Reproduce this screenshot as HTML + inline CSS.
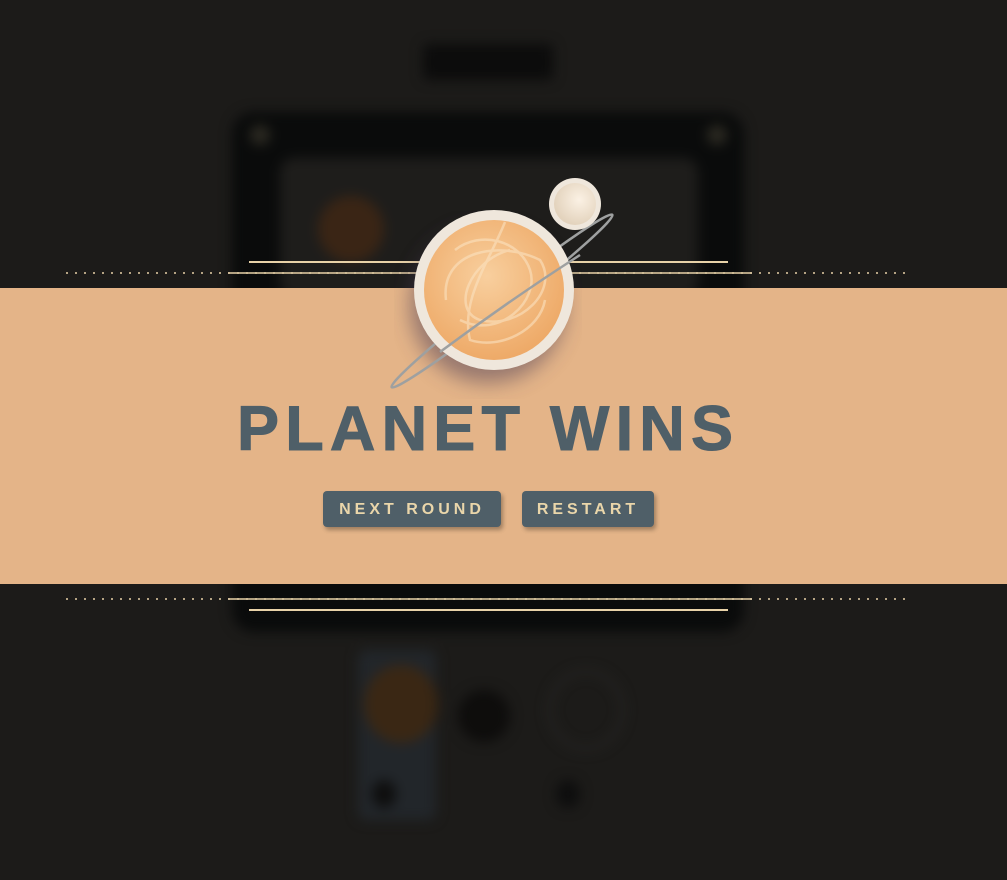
<!DOCTYPE html>
<html><head><meta charset="utf-8"><style>
html,body{margin:0;padding:0;width:1007px;height:880px;overflow:hidden;background:#1c1b19;font-family:"Liberation Sans",sans-serif}
.bg{position:absolute;inset:0;filter:blur(6px)}
.abs{position:absolute}
.banner{position:absolute;left:0;top:288px;width:1007px;height:296px;background:#e4b488}
.title{position:absolute;left:237px;width:520px;top:392px;text-align:left;font-size:63px;font-weight:bold;letter-spacing:6.2px;color:#4f5f68;line-height:74px;-webkit-text-stroke:1px #4f5f68;white-space:nowrap}
.btn{position:absolute;top:491px;height:36px;background:#4f5f68;border-radius:4px;color:#ead6aa;font-weight:bold;font-size:16px;letter-spacing:4px;line-height:37px;text-align:center;box-shadow:2px 3px 4px rgba(0,0,0,.3)}
</style></head><body>
<div class="bg">
  <div class="abs" style="left:423px;top:44px;width:130px;height:36px;background:#0c0c0c;border-radius:6px"></div>
  <div class="abs" style="left:232px;top:112px;width:512px;height:520px;background:#0a0b0b;border-radius:22px"></div>
  <div class="abs" style="left:280px;top:158px;width:418px;height:140px;background:#1e1d1b;border-radius:14px"></div>
  <div class="abs" style="left:318px;top:196px;width:66px;height:66px;background:#3a2515;border-radius:50%"></div>
  <div class="abs" style="left:250px;top:125px;width:20px;height:20px;background:#2c2a22;border-radius:50%"></div>
  <div class="abs" style="left:707px;top:125px;width:20px;height:20px;background:#2c2a22;border-radius:50%"></div>
  <div class="abs" style="left:358px;top:650px;width:78px;height:170px;background:#22262a;border-radius:8px"></div>
  <div class="abs" style="left:364px;top:665px;width:74px;height:78px;background:#3a2714;border-radius:50%"></div>
  <div class="abs" style="left:458px;top:690px;width:52px;height:52px;background:#0e0d0c;border-radius:50%"></div>
  <div class="abs" style="left:548px;top:670px;width:70px;height:74px;border:3px solid #2a2927;border-radius:50%"></div>
  <div class="abs" style="left:372px;top:780px;width:24px;height:28px;background:#0e0e0e;border-radius:50%"></div>
  <div class="abs" style="left:556px;top:780px;width:24px;height:28px;background:#0e0e0e;border-radius:50%"></div>
</div>
<div class="banner"></div>
<svg class="abs" style="left:0;top:0" width="1007" height="880">
  <line x1="66" y1="273" x2="912" y2="273" stroke="#e8d2a8" stroke-width="1.5" stroke-dasharray="2 7"/>
  <line x1="228" y1="273" x2="752" y2="273" stroke="#e8d2a8" stroke-width="1.5"/>
  <line x1="249" y1="262" x2="728" y2="262" stroke="#e8d2a8" stroke-width="2"/>
  <line x1="66" y1="599" x2="912" y2="599" stroke="#e8d2a8" stroke-width="1.5" stroke-dasharray="2 7"/>
  <line x1="228" y1="599" x2="752" y2="599" stroke="#e8d2a8" stroke-width="1.5"/>
  <line x1="249" y1="610" x2="728" y2="610" stroke="#e8d2a8" stroke-width="2"/>
  <defs>
    <radialGradient id="pg" cx="45%" cy="40%" r="60%"><stop offset="0" stop-color="#f8cf9e"/><stop offset="1" stop-color="#eeaa68"/></radialGradient>
    <radialGradient id="mg" cx="60%" cy="40%" r="60%"><stop offset="0" stop-color="#fbf1e4"/><stop offset="1" stop-color="#e3d3bd"/></radialGradient>
    <filter id="sh"><feGaussianBlur stdDeviation="10"/></filter>
  </defs>
  <circle cx="488" cy="305" r="78" fill="#4a3a55" opacity=".5" filter="url(#sh)"/>
  <ellipse cx="502" cy="301" rx="140" ry="9" transform="rotate(-38 502 301)" fill="none" stroke="#9ea0a0" stroke-width="2.5"/>
  <circle cx="494" cy="290" r="80" fill="#efe7dc"/>
  <circle cx="494" cy="290" r="70" fill="url(#pg)"/>
  <g fill="none" stroke="#fbe2c0" stroke-width="2.5" opacity=".6">
    <path d="M446 300 C440 250 500 240 540 260 C560 290 520 330 480 320 C450 310 470 260 510 250"/>
    <path d="M505 222 C490 260 460 300 470 340 C500 350 540 330 545 300"/>
    <path d="M455 250 C480 230 520 240 530 270 C540 300 500 340 460 320"/>
  </g>
  <path d="M440 352 Q510 300 580 255" fill="none" stroke="#9ea0a0" stroke-width="2.5"/>
  <circle cx="575" cy="204" r="26" fill="#efe7dc"/>
  <circle cx="575" cy="204" r="21" fill="url(#mg)"/>
</svg>
<div class="title">PLANET WINS</div>
<div class="btn" style="left:323px;width:178px">NEXT ROUND</div>
<div class="btn" style="left:522px;width:132px">RESTART</div>
</body></html>
